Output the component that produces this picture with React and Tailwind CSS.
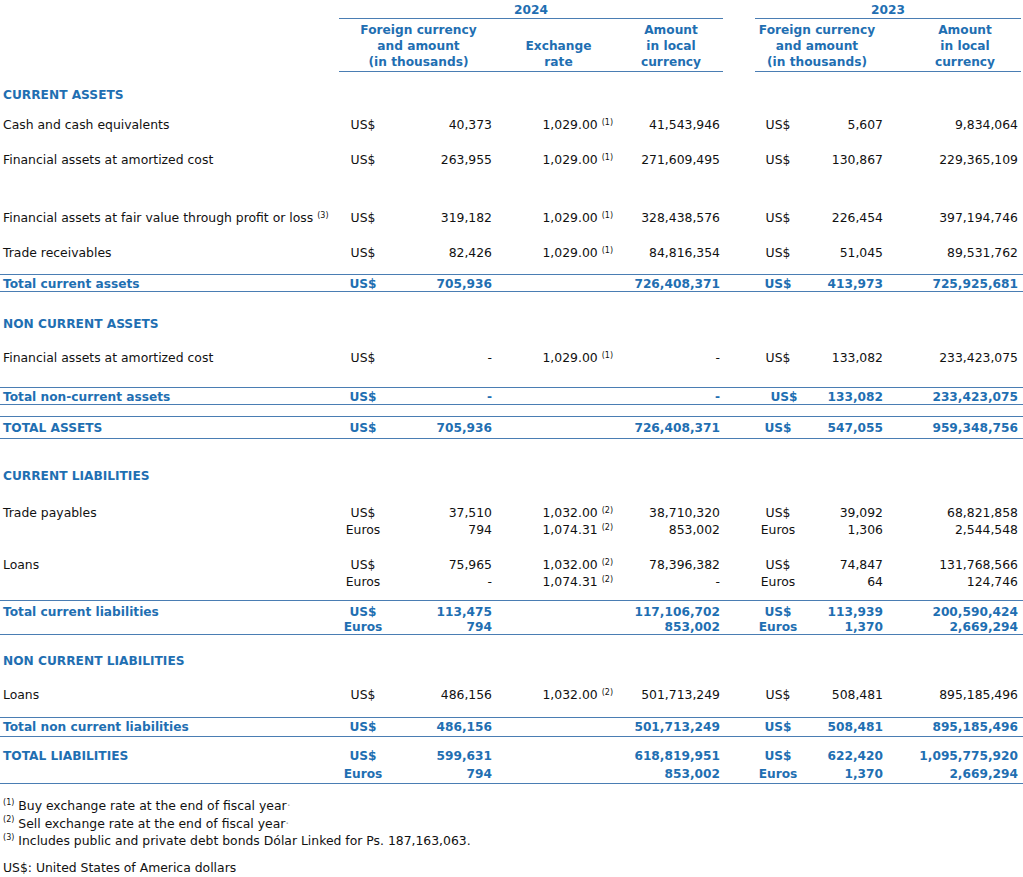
import React from "react";

const COLS = "grid grid-cols-[339px_48px_105px_121px_110px_32px_46px_82px_138px]";
const BLUE = "text-[#1f6fb2]";
const LINE = "border-[#4a7db3]";

// one row of figures: [cur24, foreign24, rate, sup, local24, cur23, foreign23, local23]
function Line({ label, labelSup, d, h, bold, shift }) {
  const [c24, f24, rate, sup, l24, c23, f23, l23] = d;
  const tone = bold ? `font-bold text-[12.2px] ${BLUE}` : "text-[#111]";
  return (
    <div className={`${COLS} ${h} items-center ${tone}`}>
      <div className="pl-[3px] whitespace-nowrap">
        {label}
        {labelSup && <sup className="text-[8px] ml-[4px]">({labelSup})</sup>}
      </div>
      <div className="text-center">{c24}</div>
      <div className="text-right">{f24}</div>
      <div className="text-right whitespace-nowrap">
        {rate}
        {sup && <sup className="text-[8px] ml-[4px]">({sup})</sup>}
      </div>
      <div className="text-right pr-[3px]">{l24}</div>
      <div />
      <div className={`text-center ${shift ? "pl-[12px]" : ""}`}>{c23}</div>
      <div className="text-right">{f23}</div>
      <div className="text-right pr-[3px]">{l23}</div>
    </div>
  );
}

function Title({ children, h }) {
  return <div className={`${h} flex items-center pl-[3px] font-bold text-[12.2px] ${BLUE}`}>{children}</div>;
}

function Header() {
  return (
    <div className={`font-bold text-[12.2px] ${BLUE} leading-[16px]`}>
      <div className={`${COLS} h-[19px]`}>
        <div className={`col-start-2 col-span-4 border-b ${LINE} text-center pt-[2px]`}>2024</div>
        <div className={`col-start-7 col-span-3 border-b ${LINE} text-center pt-[2px]`}>2023</div>
      </div>
      <div className={`${COLS} h-[53px]`}>
        <div className={`col-start-2 col-span-2 border-b ${LINE} text-center pt-[3px] pl-[6px]`}>
          Foreign currency<br />and amount<br />(in thousands)
        </div>
        <div className={`border-b ${LINE} text-center pt-[19px] pl-[12px]`}>
          Exchange<br />rate
        </div>
        <div className={`border-b ${LINE} text-center pt-[3px] pl-[6px]`}>
          Amount<br />in local<br />currency
        </div>
        <div />
        <div className={`col-span-2 border-b ${LINE} text-center pt-[3px] pr-[4px]`}>
          Foreign currency<br />and amount<br />(in thousands)
        </div>
        <div className={`border-b ${LINE} text-center pt-[3px] pl-[26px]`}>
          Amount<br />in local<br />currency
        </div>
      </div>
    </div>
  );
}

function Note({ n, children }) {
  return (
    <div className="h-[17.5px] flex items-center pl-[3px]">
      <sup className="text-[8px] mr-[4px]">({n})</sup>
      {children}
    </div>
  );
}

export default function App() {
  return (
    <div className="w-[1023px] h-[877px] bg-white text-[12.4px] overflow-hidden" style={{ fontFamily: '"DejaVu Sans", Verdana, sans-serif' }}>
      <Header />

      <div className="h-[8px]" />
      <Title h="h-[30px]">CURRENT ASSETS</Title>
      <Line h="h-[30px]" label="Cash and cash equivalents" d={["US$", "40,373", "1,029.00", "1", "41,543,946", "US$", "5,607", "9,834,064"]} />
      <Line h="h-[40px]" label="Financial assets at amortized cost" d={["US$", "263,955", "1,029.00", "1", "271,609,495", "US$", "130,867", "229,365,109"]} />
      <div className="h-[20px]" />
      <Line h="h-[36px]" label="Financial assets at fair value through profit or loss" labelSup="3" d={["US$", "319,182", "1,029.00", "1", "328,438,576", "US$", "226,454", "397,194,746"]} />
      <Line h="h-[34px]" label="Trade receivables" d={["US$", "82,426", "1,029.00", "1", "84,816,354", "US$", "51,045", "89,531,762"]} />
      <div className="h-[4px]" />
      <div className={`border-y ${LINE}`}>
        <Line bold h="h-[16px]" label="Total current assets" d={["US$", "705,936", "", "", "726,408,371", "US$", "413,973", "725,925,681"]} />
      </div>

      <div className="h-[16px]" />
      <Title h="h-[32px]">NON CURRENT ASSETS</Title>
      <Line h="h-[36px]" label="Financial assets at amortized cost" d={["US$", "-", "1,029.00", "1", "-", "US$", "133,082", "233,423,075"]} />
      <div className="h-[11px]" />
      <div className={`border-y ${LINE}`}>
        <Line bold shift h="h-[16px]" label="Total non-current assets" d={["US$", "-", "", "", "-", "US$", "133,082", "233,423,075"]} />
      </div>
      <div className="h-[11px]" />
      <div className={`border-y ${LINE} pt-[1px]`}>
        <Line bold h="h-[20px]" label="TOTAL ASSETS" d={["US$", "705,936", "", "", "726,408,371", "US$", "547,055", "959,348,756"]} />
      </div>

      <div className="h-[21px]" />
      <Title h="h-[32px]">CURRENT LIABILITIES</Title>
      <div className="pt-[12px] pb-[9px]">
        <Line h="h-[17px]" label="Trade payables" d={["US$", "37,510", "1,032.00", "2", "38,710,320", "US$", "39,092", "68,821,858"]} />
        <Line h="h-[17px]" label="" d={["Euros", "794", "1,074.31", "2", "853,002", "Euros", "1,306", "2,544,548"]} />
      </div>
      <div className="pt-[9px] pb-[10px]">
        <Line h="h-[17px]" label="Loans" d={["US$", "75,965", "1,032.00", "2", "78,396,382", "US$", "74,847", "131,768,566"]} />
        <Line h="h-[17px]" label="" d={["Euros", "-", "1,074.31", "2", "-", "Euros", "64", "124,746"]} />
      </div>
      <div className={`border-y ${LINE} pt-[2px] pb-[1px]`}>
        <Line bold h="h-[15px]" label="Total current liabilities" d={["US$", "113,475", "", "", "117,106,702", "US$", "113,939", "200,590,424"]} />
        <Line bold h="h-[15px]" label="" d={["Euros", "794", "", "", "853,002", "Euros", "1,370", "2,669,294"]} />
      </div>

      <div className="h-[10px]" />
      <Title h="h-[32px]">NON CURRENT LIABILITIES</Title>
      <Line h="h-[36px]" label="Loans" d={["US$", "486,156", "1,032.00", "2", "501,713,249", "US$", "508,481", "895,185,496"]} />
      <div className="h-[4px]" />
      <div className={`border-y ${LINE}`}>
        <Line bold h="h-[18px]" label="Total non current liabilities" d={["US$", "486,156", "", "", "501,713,249", "US$", "508,481", "895,185,496"]} />
      </div>
      <div className={`border-b ${LINE} pt-[10px]`}>
        <Line bold h="h-[18px]" label="TOTAL LIABILITIES" d={["US$", "599,631", "", "", "618,819,951", "US$", "622,420", "1,095,775,920"]} />
        <Line bold h="h-[18px]" label="" d={["Euros", "794", "", "", "853,002", "Euros", "1,370", "2,669,294"]} />
      </div>

      <div className="pt-[14px] text-[#111]">
        <Note n="1">Buy exchange rate at the end of fiscal year<span className="text-[#aaa]">·</span></Note>
        <Note n="2">Sell exchange rate at the end of fiscal year<span className="text-[#aaa]">·</span></Note>
        <Note n="3">Includes public and private debt bonds Dólar Linked for Ps. 187,163,063.</Note>
        <div className="mt-[9px] h-[17px] flex items-center pl-[3px]">US$: United States of America dollars</div>
      </div>
    </div>
  );
}
